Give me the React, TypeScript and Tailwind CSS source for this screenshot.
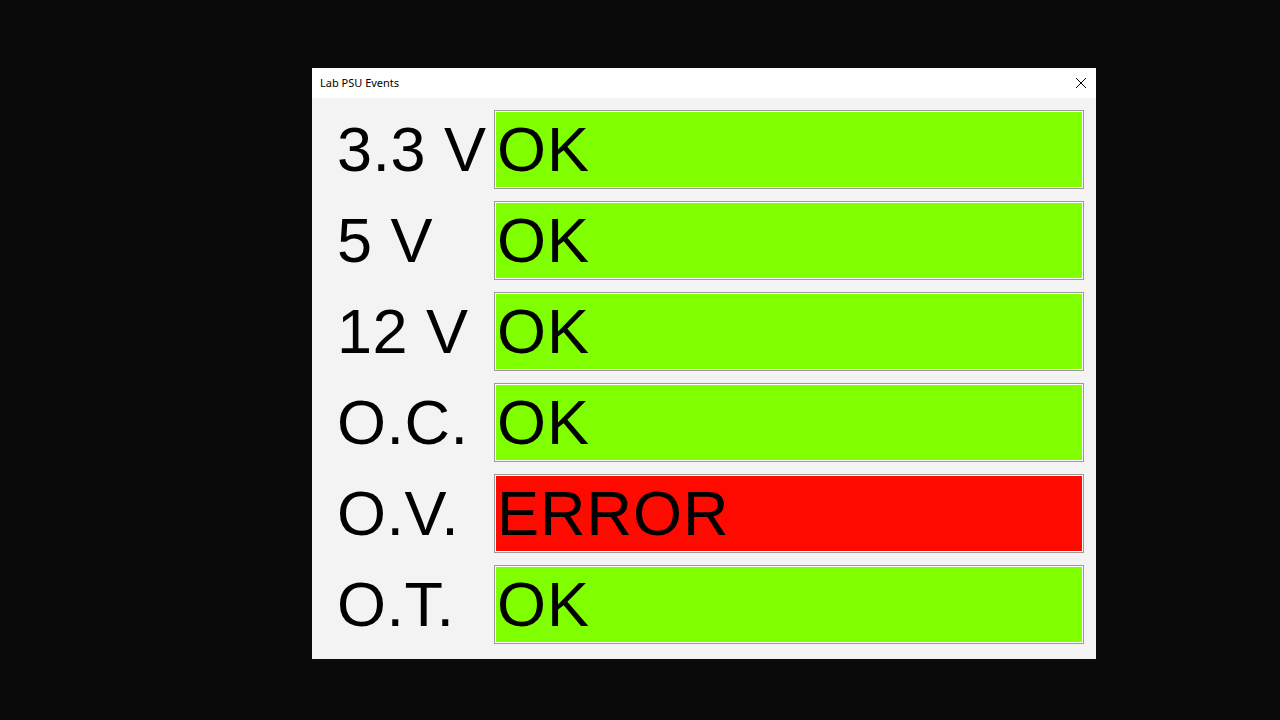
import React from "react";

const rows: { label: string; ok: boolean }[] = [
  { label: "3.3 V", ok: true },
  { label: "5 V", ok: true },
  { label: "12 V", ok: true },
  { label: "O.C.", ok: true },
  { label: "O.V.", ok: false },
  { label: "O.T.", ok: true },
];

export default function App() {
  return (
    <div className="w-[1280px] h-[720px] bg-[#0a0a0a] pt-[68px] pl-[312px] overflow-hidden">
      <div className="w-[784px] h-[591px] bg-[#f3f3f3] flex flex-col">
        <div className="h-[30px] bg-white flex items-center justify-between pl-[8px] pr-[9px] shrink-0">
          <span className="text-[11px] text-black" style={{ fontFamily: '"Segoe UI", "Noto Sans", sans-serif' }}>
            Lab PSU Events
          </span>
          <svg width="12" height="12" viewBox="0 0 12 12" className="text-black">
            <path d="M1 1 L11 11 M11 1 L1 11" stroke="currentColor" strokeWidth="1" fill="none" />
          </svg>
        </div>
        <div className="flex flex-col gap-[12px] pt-[12px] pl-[25px] pr-[12px]">
          {rows.map((r) => (
            <div key={r.label} className="flex items-center h-[79px]" style={{ fontFamily: '"Liberation Sans", Arial, sans-serif' }}>
              <div className="w-[157px] text-[63px] leading-none text-black whitespace-nowrap tracking-[0.5px]">{r.label}</div>
              <div className="w-[590px] h-[79px] border border-[#9a9a9a] p-px bg-white">
                <div className={`h-full flex items-center pl-px text-[63px] leading-none text-black tracking-[1px] ${r.ok ? "bg-[#7fff00]" : "bg-[#ff0a00]"}`}>
                  {r.ok ? "OK" : "ERROR"}
                </div>
              </div>
            </div>
          ))}
        </div>
      </div>
    </div>
  );
}
